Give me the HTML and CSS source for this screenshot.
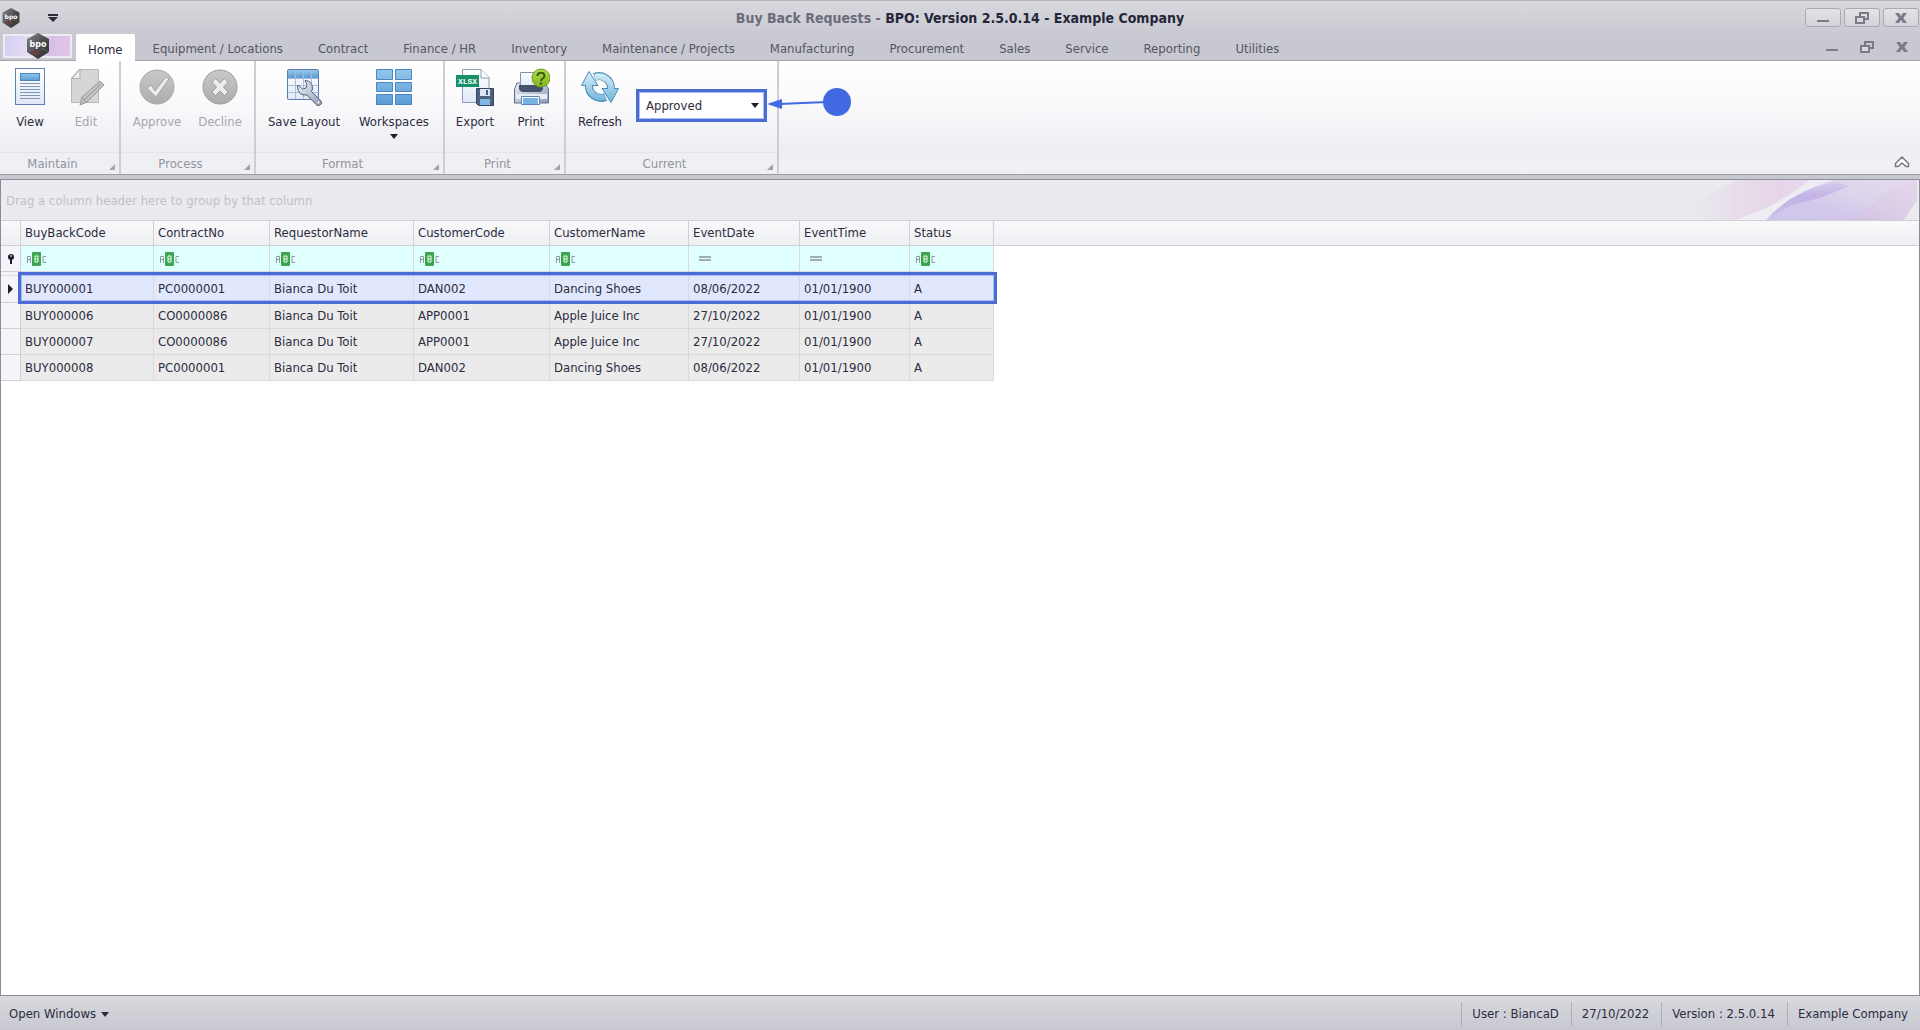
FILE: index.html
```html
<!DOCTYPE html>
<html lang="en">
<head>
<meta charset="utf-8">
<title>Buy Back Requests - BPO: Version 2.5.0.14 - Example Company</title>
<link rel="stylesheet" href="styles.css">
</head>
<body>
<svg class="defs" aria-hidden="true">
  <defs>
    <linearGradient id="blue" x1="0" y1="0" x2="0" y2="1"><stop offset="0" stop-color="#93c6ea"/><stop offset="1" stop-color="#5b9bd5"/></linearGradient>
    <linearGradient id="page" x1="0" y1="0" x2="0" y2="1"><stop offset="0" stop-color="#ffffff"/><stop offset="1" stop-color="#dfe8f5"/></linearGradient>
    <linearGradient id="steel" x1="0" y1="0" x2="1" y2="1"><stop offset="0" stop-color="#eef1f6"/><stop offset="1" stop-color="#8e9bb3"/></linearGradient>
    <linearGradient id="grey" x1="0" y1="0" x2="0" y2="1"><stop offset="0" stop-color="#c9c9c9"/><stop offset="1" stop-color="#acacac"/></linearGradient>
    <linearGradient id="sky" gradientUnits="userSpaceOnUse" x1="0" y1="4" x2="0" y2="34"><stop offset="0" stop-color="#d8f0fa"/><stop offset="1" stop-color="#6fb4dc"/></linearGradient>
    <linearGradient id="lime" x1="0" y1="0" x2="0" y2="1"><stop offset="0" stop-color="#b6dc4a"/><stop offset="1" stop-color="#7fb51c"/></linearGradient>
    <linearGradient id="hex" x1="0" y1="0" x2="1" y2="1"><stop offset="0" stop-color="#8a8a8c"/><stop offset=".5" stop-color="#4c4c4e"/><stop offset="1" stop-color="#2e2e30"/></linearGradient>
    <symbol id="logo" viewBox="0 0 24 26">
      <path d="M12 0 23 6v13l-11 7L1 19V6z" fill="url(#hex)"/>
      <path d="M12 0v9M1 19l8-4M23 19l-8-4" stroke="#77777a" stroke-width=".6"/>
      <text x="12" y="14" class="logo-text">bpo</text>
      <path d="M8 16.500a2.500 2.500 0 1 0 3 0M11 19l2 2" fill="none" stroke="#a03338" stroke-width="1"/>
    </symbol>
    <symbol id="restore" viewBox="0 0 14 12">
      <path d="M5 1h8v6H5z" fill="none" stroke="#7b7b88" stroke-width="2"/>
      <path d="M1 5h8v6H1z" fill="#d9d9df" stroke="#7b7b88" stroke-width="2"/>
    </symbol>
    <symbol id="cross" viewBox="0 0 12 10"><path d="M0 0h4l2 3 2-3h4L8.300 5l3.700 5H8L6 7l-2 3H0l3.700-5z" fill="#7b7b88"/></symbol>
    <symbol id="dash" viewBox="0 0 12 10"><path d="M0 7h12v2H0z" fill="#7b7b88"/></symbol>
    <symbol id="abc" viewBox="0 0 20 14">
      <path d="M.5 11V4.500h3V11M.5 7.500h3M19 4.500h-3v6h3" fill="none" stroke="#8d9a9d" stroke-width="1"/>
      <rect x="5" width="9" height="14" rx="1" fill="#3fa650"/>
      <path d="M8 4h3v6H8zM8 7h3" fill="none" stroke="#eafff0" stroke-width="1"/>
    </symbol>
    <symbol id="equals" viewBox="0 0 12 6"><path d="M0 1h12M0 4h12" stroke="#87939a" stroke-width="1.500"/></symbol>
  </defs>
</svg>

<div class="app">
  <header class="chrome">
    <div class="titlebar">
      <div class="quick">
        <svg class="logo-small"><use href="#logo"/></svg>
        <button class="bare" aria-label="Customize quick access"><svg width="10" height="8"><path d="M0 0h10v2H0zM0 3h10L5 8z" fill="#2c2c3c"/></svg></button>
      </div>
      <h1 class="title"><span class="doc">Buy Back Requests - </span>BPO: Version 2.5.0.14 - Example Company</h1>
      <div class="winbtns">
        <button class="winbtn" aria-label="Minimize"><svg width="12" height="10"><use href="#dash"/></svg></button>
        <button class="winbtn" aria-label="Restore"><svg width="14" height="12"><use href="#restore"/></svg></button>
        <button class="winbtn" aria-label="Close"><svg width="12" height="10"><use href="#cross"/></svg></button>
      </div>
    </div>
    <nav class="tabs">
      <button class="appbtn" aria-label="Application menu"><svg class="logo-mid"><use href="#logo"/></svg></button>
      <a class="tab active" href="#home">Home</a>
      <a class="tab" href="#equipment">Equipment / Locations</a>
      <a class="tab" href="#contract">Contract</a>
      <a class="tab" href="#finance">Finance / HR</a>
      <a class="tab" href="#inventory">Inventory</a>
      <a class="tab" href="#maintenance">Maintenance / Projects</a>
      <a class="tab" href="#manufacturing">Manufacturing</a>
      <a class="tab" href="#procurement">Procurement</a>
      <a class="tab" href="#sales">Sales</a>
      <a class="tab" href="#service">Service</a>
      <a class="tab" href="#reporting">Reporting</a>
      <a class="tab" href="#utilities">Utilities</a>
      <div class="childbtns">
        <button class="bare" aria-label="Minimize window"><svg width="12" height="10"><use href="#dash"/></svg></button>
        <button class="bare" aria-label="Restore window"><svg width="14" height="12"><use href="#restore"/></svg></button>
        <button class="bare" aria-label="Close window"><svg width="12" height="10"><use href="#cross"/></svg></button>
      </div>
    </nav>
  </header>

  <section class="ribbon">
    <div class="group">
      <div class="tools">
        <button class="tool w56">
          <svg class="icon" viewBox="0 0 38 38"><rect x="4.500" y=".5" width="29" height="36" fill="url(#page)" stroke="#5f7fb5"/><rect x="9.500" y="5.500" width="19" height="7" fill="url(#blue)" stroke="#4c86bf"/><path d="M9 15.500h20M9 18.500h20M9 21.500h20M9 24.500h20M9 27.500h20M9 30.500h20" stroke="#8296b8"/></svg>
          View</button>
        <button class="tool w56" disabled>
          <svg class="icon" viewBox="0 0 38 38"><path d="M12 1.500h19.500v33h-27V10z" fill="#d6d6d6" stroke="#b9b9b9"/><path d="M4.500 10.500H13V1.500z" fill="#eee" stroke="#b0b0b0"/><path d="m13 37 2-8 18-16 4 4-17 17z" fill="#c2c2c2" stroke="#989898"/><path d="m15 30 4 4M17 32l17-16" stroke="#989898"/></svg>
          Edit</button>
      </div>
      <div class="caption"><span>Maintain</span></div>
    </div>
    <div class="group">
      <div class="tools">
        <button class="tool w68" disabled>
          <svg class="icon" viewBox="0 0 38 38"><circle cx="19" cy="19" r="17" fill="url(#grey)" stroke="#a8a8a8"/><path d="m9 20 4-3 4 6L28 9l3 2-13 18z" fill="#ececec" stroke="#999" stroke-width=".8"/></svg>
          Approve</button>
        <button class="tool w58" disabled>
          <svg class="icon" viewBox="0 0 38 38"><circle cx="19" cy="19" r="17" fill="url(#grey)" stroke="#9c9c9c"/><path d="m11 14 3.500-3.500L19 15l4.500-4.500L27 14l-4.500 5 4.500 5-3.500 3.500L19 23l-4.500 4.500L11 24l4.500-5z" fill="#ececec" stroke="#909090" stroke-width=".8"/></svg>
          Decline</button>
      </div>
      <div class="caption"><span>Process</span></div>
    </div>
    <div class="group">
      <div class="tools">
        <button class="tool w92">
          <svg class="icon" viewBox="0 0 38 38"><rect x="2.500" y="1.500" width="31" height="30" rx="1" fill="url(#page)" stroke="#5c7bb0"/><path d="M3 2h30v8H3z" fill="url(#blue)"/><path d="M10.500 2v29M18.500 2v29M26.500 2v29M3 10.500h30M3 17.500h30M3 24.500h30" stroke="#a9bcdc"/><path d="M20 12.500q7 0 7.500 7.500 0 2-1 3.500L36 33q2 3-2 4.500-2 .5-3-1L22 27q-9 1-9.500-8 0-1 .5-2l4.500 4 3.500-1 1-3.500z" fill="url(#steel)" stroke="#52617f"/><circle cx="33.500" cy="34.500" r="1" fill="#fff"/></svg>
          Save Layout</button>
        <button class="tool w88">
          <svg class="icon" viewBox="0 0 38 38"><g fill="url(#blue)" stroke="#4b86c2"><path d="M1.500 1.500h16v10h-16zM20.500 1.500h16v10h-16zM1.500 14.500h16v9h-16zM20.500 14.500h16v9h-16zM1.500 26.500h16v10h-16zM20.500 26.500h16v10h-16z"/></g></svg>
          Workspaces
          <svg class="drop" width="8" height="5"><path d="M0 0h8L4 5z" fill="#1e1e2e"/></svg></button>
      </div>
      <div class="caption"><span>Format</span></div>
    </div>
    <div class="group">
      <div class="tools">
        <button class="tool w56">
          <svg class="icon" viewBox="0 0 38 38"><path d="M6.500 1.500H25l8 8v25H6.500z" fill="url(#page)" stroke="#8c9cba"/><path d="M25 1.500v8.500h8" fill="#fff" stroke="#8c9cba"/><rect y="7" width="23" height="12" fill="#17906a"/><text x="11.500" y="16" class="badge-text">XLSX</text><path d="M20.500 20.500h17v17h-15l-2-2z" fill="#4e617f" stroke="#34435f"/><path d="M24 21h10v7H24z" fill="#dde6f2"/><path d="M30 22h2v5h-2z" fill="#4e617f"/><path d="M24 31h10v6H24z" fill="#7fb8e4"/></svg>
          Export</button>
        <button class="tool w56">
          <svg class="icon" viewBox="0 0 38 38"><path d="M5 15h28l3.500 6v14h-34V21z" fill="url(#steel)" stroke="#5e6f92"/><path d="M8.500 4.500h20v14h-20z" fill="url(#page)" stroke="#8192b5"/><path d="M7 17h24v4q-1 3-4 3H11q-3 0-4-3z" fill="#46516b"/><path d="M4 26h31v5H4z" fill="#e6ebf4"/><path d="M9.500 28.500h18v8h-18z" fill="#fff" stroke="#5e86b8"/><path d="M11 30h15v6H11z" fill="#77b3e2"/><circle cx="29" cy="10" r="9" fill="url(#lime)" stroke="#6f9a1c"/><path d="M25.500 8c0-4.500 7-4.500 7 0 0 2.500-3.500 2.500-3.500 5" fill="none" stroke="#3c5a10" stroke-width="2"/><circle cx="29" cy="15.500" r="1.300" fill="#3c5a10"/></svg>
          Print</button>
      </div>
      <div class="caption"><span>Print</span></div>
    </div>
    <div class="group last">
      <div class="tools">
        <button class="tool w64">
          <svg class="icon" viewBox="0 0 38 38"><g fill="none"><path d="M13.500 9A12 12 0 0 1 30 21M24.500 29A12 12 0 0 1 8 17" stroke="#4f8bb4" stroke-width="8"/></g><path d="M21 20.500h16.500L30 34.500zM17 17.500H.5L8 3.500z" fill="url(#sky)" stroke="#4f8bb4"/><path d="M14 9.200A12 12 0 0 1 30 22M24 28.800A12 12 0 0 1 8 16" fill="none" stroke="url(#sky)" stroke-width="6"/></svg>
          Refresh</button>
        <div class="combo">
          <select class="select" aria-label="Request status"><option>Approved</option><option>Declined</option></select>
          <svg class="arrow" width="8" height="5"><path d="M0 0h8L4 5z" fill="#1e1e2e"/></svg>
          <svg class="callout" width="84" height="28"><path d="M60 14 12 16" stroke="#4169e1" stroke-width="2"/><path d="M0 16 15 11v10z" fill="#4169e1"/><circle cx="70" cy="14" r="14" fill="#4169e1"/></svg>
        </div>
      </div>
      <div class="caption"><span>Current</span></div>
    </div>
    <button class="bare collapse" aria-label="Collapse ribbon"><svg width="16" height="12" viewBox="0 0 16 12"><path d="m8 1 6.500 6.500v3H12L8 7l-4 3.500H1.500v-3z" fill="#fff" stroke="#777783" stroke-width="1.500" stroke-linejoin="round"/></svg></button>
  </section>

  <main class="grid">
    <div class="grouppanel">
      <span>Drag a column header here to group by that column</span>
      <svg class="swoosh" viewBox="0 0 260 40" preserveAspectRatio="none">
        <defs>
          <linearGradient id="pinkband" x1="0" x2="1"><stop offset="0" stop-color="#ebebef" stop-opacity="0"/><stop offset=".5" stop-color="#e7dde9"/><stop offset=".8" stop-color="#e6d5e8"/><stop offset="1" stop-color="#ead9ee"/></linearGradient>
          <linearGradient id="violet" x1="0" y1="1" x2="1" y2="0"><stop offset="0" stop-color="#d0c6ee"/><stop offset=".35" stop-color="#d3c8ea"/><stop offset=".6" stop-color="#dcd4ec"/><stop offset="1" stop-color="#e4dcee"/></linearGradient>
          <linearGradient id="glow" x1="0" y1="0" x2="0" y2="1"><stop offset="0" stop-color="#c3b3e6" stop-opacity=".3"/><stop offset=".4" stop-color="#c3b3e6"/><stop offset="1" stop-color="#c3b3e6" stop-opacity=".3"/></linearGradient>
          <linearGradient id="mauve" x1="0" y1="1" x2="1" y2="0"><stop offset="0" stop-color="#d6c2e2"/><stop offset="1" stop-color="#e4d6ea"/></linearGradient>
        </defs>
        <path d="M0 40C20 34 50 10 80 0h70Q110 30 75 40z" fill="url(#pinkband)"/>
        <path d="M75 40Q130 22 150 0h24Q125 20 106 40z" fill="#eeedf2"/>
        <path d="M106 40Q130 13 174 0h84v20l-14 20z" fill="url(#violet)"/>
        <path d="M106 40Q130 12 174 2L190 6 160 18 130 26z" fill="url(#glow)"/>
        <path d="M194 40Q218 16 250 0h8v20l-13 20z" fill="url(#mauve)" opacity=".7"/>
      </svg>
    </div>
    <table class="data">
      <colgroup><col class="c20"><col class="c133"><col class="c116"><col class="c144"><col class="c136"><col class="c139"><col class="c111"><col class="c110"><col class="c84"><col></colgroup>
      <thead>
        <tr class="head"><th></th><th>BuyBackCode</th><th>ContractNo</th><th>RequestorName</th><th>CustomerCode</th><th>CustomerName</th><th>EventDate</th><th>EventTime</th><th>Status</th><th></th></tr>
        <tr class="filter">
          <td class="ind"><svg width="8" height="10"><circle cx="4" cy="3" r="3" fill="#1e1e2e"/><path d="M4 4v6" stroke="#1e1e2e" stroke-width="2"/><path d="M3 2h2" stroke="#fff"/></svg></td>
          <td><label><svg class="abc"><use href="#abc"/></svg><input aria-label="Filter BuyBackCode"></label></td>
          <td><label><svg class="abc"><use href="#abc"/></svg><input aria-label="Filter ContractNo"></label></td>
          <td><label><svg class="abc"><use href="#abc"/></svg><input aria-label="Filter RequestorName"></label></td>
          <td><label><svg class="abc"><use href="#abc"/></svg><input aria-label="Filter CustomerCode"></label></td>
          <td><label><svg class="abc"><use href="#abc"/></svg><input aria-label="Filter CustomerName"></label></td>
          <td><label><svg class="eq"><use href="#equals"/></svg><input aria-label="Filter EventDate"></label></td>
          <td><label><svg class="eq"><use href="#equals"/></svg><input aria-label="Filter EventTime"></label></td>
          <td><label><svg class="abc"><use href="#abc"/></svg><input aria-label="Filter Status"></label></td>
          <td class="rest"></td>
        </tr>
      </thead>
      <tbody>
        <tr class="gap"><td colspan="9"></td><td class="rest"></td></tr>
        <tr class="selected"><td class="ind"><svg width="6" height="10"><path d="M0 0l5 5-5 5z" fill="#1e1e2e"/></svg></td><td>BUY000001</td><td>PC0000001</td><td>Bianca Du Toit</td><td>DAN002</td><td>Dancing Shoes</td><td>08/06/2022</td><td>01/01/1900</td><td>A</td><td class="rest"></td></tr>
        <tr><td class="ind"></td><td>BUY000006</td><td>CO0000086</td><td>Bianca Du Toit</td><td>APP0001</td><td>Apple Juice Inc</td><td>27/10/2022</td><td>01/01/1900</td><td>A</td><td class="rest"></td></tr>
        <tr><td class="ind"></td><td>BUY000007</td><td>CO0000086</td><td>Bianca Du Toit</td><td>APP0001</td><td>Apple Juice Inc</td><td>27/10/2022</td><td>01/01/1900</td><td>A</td><td class="rest"></td></tr>
        <tr><td class="ind"></td><td>BUY000008</td><td>PC0000001</td><td>Bianca Du Toit</td><td>DAN002</td><td>Dancing Shoes</td><td>08/06/2022</td><td>01/01/1900</td><td>A</td><td class="rest"></td></tr>
      </tbody>
    </table>
  </main>

  <footer class="status">
    <button class="bare openwin">Open Windows <svg width="8" height="5"><path d="M0 0h8L4 5z" fill="#2c2c3c"/></svg></button>
    <span class="cell">User : BiancaD</span>
    <span class="cell">27/10/2022</span>
    <span class="cell">Version : 2.5.0.14</span>
    <span class="cell">Example Company</span>
  </footer>
</div>
</body>
</html>
```

FILE: styles.css
```css
*, *::before, *::after { box-sizing: border-box; }

body {
  margin: 0;
  font-family: "DejaVu Sans Condensed", "DejaVu Sans", Tahoma, sans-serif;
  font-stretch: condensed;
  font-size: 13px;
  line-height: 16px;
  color: #2c2c40;
}

button, input, select { font: inherit; color: inherit; }

.defs { position: absolute; width: 0; height: 0; }

.app {
  display: flex;
  flex-direction: column;
  min-height: 100vh;
  background: #c8c8d0;
}

.bare {
  display: flex;
  align-items: center;
  padding: 0;
  border: 0;
  background: none;
}

/* Title bar and tabs */
.chrome {
  border-top: 1px solid #b4b4bc;
  border-bottom: 1px solid #a4a4ae;
  background: linear-gradient(#d8d8de, #c8c8d0 60%, #c8c8d0);
}

.titlebar {
  display: grid;
  grid-template-columns: 120px 1fr 120px;
  align-items: center;
  height: 33px;
}

.quick { display: flex; align-items: center; gap: 27px; padding-left: 1px; }
.logo-small { width: 20px; height: 20px; }
.logo-mid { width: 24px; height: 26px; }

.logo-text {
  font: bold 8px "DejaVu Sans", sans-serif;
  fill: #fff;
  text-anchor: middle;
}

.badge-text {
  font: bold 8px "Liberation Mono", monospace;
  fill: #fff;
  text-anchor: middle;
}

.title {
  margin: 0;
  font-size: 14px;
  font-weight: bold;
  text-align: center;
  color: #26263a;
}
.title .doc { color: #6c6c7a; }

.winbtns { display: flex; justify-content: flex-end; gap: 3px; padding-right: 1px; }

.winbtn {
  display: flex;
  align-items: center;
  justify-content: center;
  width: 36px;
  height: 19px;
  padding: 0;
  border: 1px solid #a9a9b3;
  border-radius: 3px;
  background: linear-gradient(#e4e4e8, #d2d2d8);
}

.tabs { display: flex; gap: 1px; height: 26px; padding-left: 3px; }

.appbtn {
  display: flex;
  align-items: center;
  justify-content: center;
  width: 69px;
  height: 24px;
  margin-right: 3px;
  padding: 0;
  border: 2px solid #ececf2;
  background: linear-gradient(100deg, #d5cdf0, #e6def4 40%, #d8bfe4 70%, #e0c6e8);
}
.appbtn svg { flex: none; }

.tab {
  display: flex;
  align-items: center;
  padding: 4px 17px 0;
  color: #555564;
  text-decoration: none;
  white-space: nowrap;
}
.tab.active {
  margin-bottom: -1px;
  padding: 4px 12px 0;
  border-radius: 2px 2px 0 0;
  background: #fff;
  color: #2c2c40;
}

.childbtns { display: flex; gap: 22px; margin-left: auto; padding-right: 12px; }

/* Ribbon */
.ribbon {
  display: flex;
  height: 114px;
  border-bottom: 1px solid #9c9ca4;
  background: linear-gradient(#fff, #fafafc 35%, #eeeff3 75%, #eff0f4);
}

.group {
  display: flex;
  flex-direction: column;
  border-right: 2px solid #cdcdd3;
}

.tools { display: flex; flex: 1; padding: 7px 5px 0 2px; }

.tool {
  display: flex;
  flex-direction: column;
  align-items: center;
  gap: 8px;
  padding: 0;
  border: 0;
  background: none;
  white-space: nowrap;
}
.tool:disabled { color: #a6a6ae; }
.icon { width: 38px; height: 38px; }
.drop { margin-top: -4px; }
.w56 { width: 56px; }
.w58 { width: 58px; }
.w64 { width: 64px; }
.w68 { width: 68px; }
.w88 { width: 88px; }
.w92 { width: 92px; }

.caption {
  display: flex;
  align-items: center;
  gap: 4px;
  height: 22px;
  padding-right: 4px;
  border-top: 1px solid #e4e4ea;
  text-align: center;
  color: #93939d;
}
.caption span { flex: 1; }
.caption::after {
  content: "";
  align-self: flex-end;
  margin-bottom: 4px;
  border-left: 6px solid transparent;
  border-bottom: 6px solid #a4a4ac;
}

.last .tools { padding-right: 10px; }

.combo {
  position: relative;
  width: 131px;
  height: 33px;
  margin: 21px 0 0 4px;
}
.select {
  width: 100%;
  height: 100%;
  padding: 0 7px;
  border: 3px solid #4a6cd4;
  outline: 1px solid #a9bdf2;
  outline-offset: -4px;
  border-radius: 0;
  background: #fff;
  appearance: none;
}
.arrow { position: absolute; right: 8px; top: 14px; pointer-events: none; }
.callout { position: absolute; left: 131px; top: -1px; }

.collapse { align-self: flex-end; margin: 0 10px 6px auto; }

/* Data grid */
.grid {
  flex: 1;
  margin-top: 4px;
  border: 1px solid #8c8c98;
  background: #fff;
}

.grouppanel {
  display: flex;
  align-items: center;
  justify-content: space-between;
  height: 40px;
  padding-left: 5px;
  background: #ebebef;
  color: #c0c0c8;
}
.grouppanel span { padding-top: 2px; }
.swoosh { width: 258px; height: 40px; }

.data {
  width: 100%;
  border-collapse: separate;
  border-spacing: 0;
  table-layout: fixed;
}
.c20 { width: 20px; }
.c84 { width: 84px; }
.c110 { width: 110px; }
.c111 { width: 111px; }
.c116 { width: 116px; }
.c133 { width: 133px; }
.c136 { width: 136px; }
.c139 { width: 139px; }
.c144 { width: 144px; }

.data th {
  height: 26px;
  padding: 0 4px;
  border: solid #cfcfd6;
  border-width: 1px 1px 1px 0;
  background: linear-gradient(#f9f9fb, #eeeff2);
  font-weight: normal;
  text-align: left;
}
.data th:last-child { border-right: 0; }

.data td {
  height: 26px;
  padding: 0 4px;
  border: solid #d9d9df;
  border-width: 0 1px 1px 0;
  background: #ebebeb;
  white-space: nowrap;
}
.data .ind { padding: 0 0 0 7px; background: #f4f5f8; border-color: #cfcfd6; }
.data .ind svg { display: block; }
.data .rest { border: 0; background: #fff; }

.data .filter td { background: #e0ffff; }
.data .filter .ind { padding-left: 6px; background: #f4f5f8; }
.data .filter .rest { background: #fff; }
.filter label { display: flex; align-items: center; padding-left: 2px; }
.filter input {
  flex: 1;
  min-width: 0;
  height: 20px;
  padding: 0 4px;
  border: 0;
  background: none;
}
.abc { width: 20px; height: 14px; }
.eq { width: 12px; height: 6px; margin-left: 4px; }

.data .gap td { height: 4px; padding: 0; background: #f4f5f8; }
.data .gap .rest { background: #fff; }

.selected { position: relative; }
.data .selected td { height: 27px; background: #e1e8fd; }
.data .selected .ind { background: #f4f5f8; }
.data .selected .rest { background: #fff; }
.selected td:nth-child(2)::before {
  content: "";
  position: absolute;
  left: 17px;
  top: -4px;
  width: 979px;
  height: 32px;
  border: 3px solid #4a6cd4;
  outline: 1px solid #a9bdf2;
  outline-offset: -4px;
}

/* Status bar */
.status {
  display: flex;
  align-items: center;
  height: 34px;
  padding: 2px 0 0 9px;
  background: linear-gradient(#d9d9df, #c8c8d0);
}
.openwin { gap: 5px; margin-right: auto; }
.cell {
  padding: 4px 12px 4px 10px;
  border-left: 1px solid #aeaeb8;
}
```
